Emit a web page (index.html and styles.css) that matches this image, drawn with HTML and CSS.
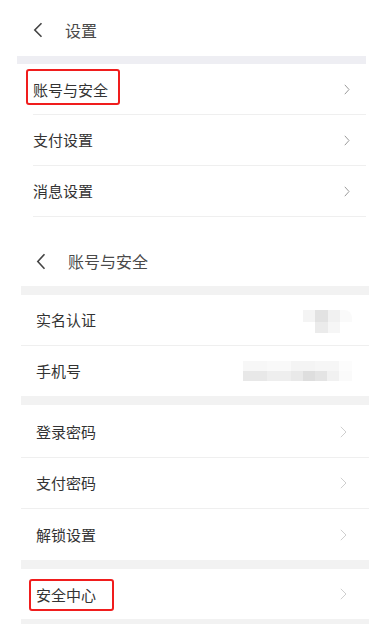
FILE: index.html
```html
<!DOCTYPE html>
<html lang="zh-CN">
<head>
<meta charset="utf-8">
<link rel="stylesheet" href="styles.css">
</head>
<body>
<section class="screen screen-a">
  <header class="nav">
    <svg class="back" width="10" height="16" viewBox="0 0 10 16"><path d="M8.5 1.2 L1.8 8 L8.5 14.8" fill="none" stroke="#444" stroke-width="1.6"/></svg>
    <span class="nav-title">设置</span>
  </header>
  <div class="band band-a"></div>
  <ul class="list list-a">
    <li class="row"><span class="label mark mark-a">账号与安全</span><svg class="chev" width="6" height="11" viewBox="0 0 6 11"><path d="M0.8 0.8 L5 5.5 L0.8 10.2" fill="none" stroke="#9a9a9a" stroke-width="1"/></svg></li>
    <li class="row"><span class="label">支付设置</span><svg class="chev" width="6" height="11" viewBox="0 0 6 11"><path d="M0.8 0.8 L5 5.5 L0.8 10.2" fill="none" stroke="#9a9a9a" stroke-width="1"/></svg></li>
    <li class="row"><span class="label">消息设置</span><svg class="chev" width="6" height="11" viewBox="0 0 6 11"><path d="M0.8 0.8 L5 5.5 L0.8 10.2" fill="none" stroke="#9a9a9a" stroke-width="1"/></svg></li>
  </ul>
</section>

<section class="screen screen-b">
  <header class="nav">
    <svg class="back" width="10" height="17" viewBox="0 0 10 17"><path d="M8.5 1.2 L1.8 8.5 L8.5 15.8" fill="none" stroke="#444" stroke-width="1.6"/></svg>
    <span class="nav-title">账号与安全</span>
  </header>
  <div class="band band-b"></div>
  <ul class="list list-b">
    <li class="row"><span class="label">实名认证</span><span class="blur blur-name"></span></li>
    <li class="row"><span class="label">手机号</span><span class="blur blur-phone"></span></li>
  </ul>
  <div class="band band-b"></div>
  <ul class="list list-b list-pw">
    <li class="row"><span class="label">登录密码</span><svg class="chev" width="7" height="12" viewBox="0 0 7 12"><path d="M0.8 0.8 L6 6 L0.8 11.2" fill="none" stroke="#cfcfcf" stroke-width="1"/></svg></li>
    <li class="row"><span class="label">支付密码</span><svg class="chev" width="7" height="12" viewBox="0 0 7 12"><path d="M0.8 0.8 L6 6 L0.8 11.2" fill="none" stroke="#cfcfcf" stroke-width="1"/></svg></li>
    <li class="row"><span class="label">解锁设置</span><svg class="chev" width="7" height="12" viewBox="0 0 7 12"><path d="M0.8 0.8 L6 6 L0.8 11.2" fill="none" stroke="#cfcfcf" stroke-width="1"/></svg></li>
  </ul>
  <div class="band band-b"></div>
  <ul class="list list-b">
    <li class="row row-last"><span class="label mark mark-b">安全中心</span><svg class="chev" width="7" height="12" viewBox="0 0 7 12"><path d="M0.8 0.8 L6 6 L0.8 11.2" fill="none" stroke="#cfcfcf" stroke-width="1"/></svg></li>
  </ul>
  <div class="band band-b band-end"></div>
</section>
</body>
</html>
```

FILE: styles.css
```css
* { box-sizing: border-box; }
html, body { margin: 0; padding: 0; background: #fff; }
body {
  width: 378px;
  height: 631px;
  overflow: hidden;
  font-family: "Noto Sans CJK SC", "Noto Sans", sans-serif;
  color: #333;
}
ul { list-style: none; margin: 0; padding: 0; }

.screen-a { margin: 0 12px 0 17px; }
.screen-b { margin: 19px 9px 0 21px; }

.nav {
  display: flex;
  align-items: center;
  gap: 22px;
}
.screen-a .nav { height: 56px; padding: 4px 0 0 16px; }
.screen-b .nav { height: 50px; padding: 0 0 0 15px; }
.back { flex: none; display: block; }
.nav-title { font-size: 16px; color: #4a4a4a; line-height: 20px; }

.band-a { height: 8px; background: #eeeef3; }
.band-b { height: 9px; background: #f2f2f2; }
.band-end { height: 5px; }

.row {
  display: flex;
  align-items: center;
  justify-content: space-between;
  border-bottom: 1px solid #efefef;
}
.label { font-size: 15px; line-height: 20px; color: #333; }
.chev { display: block; flex: none; }

.list-a .row { height: 51px; margin-left: 16px; padding-right: 16px; }
.list-b .row { height: 51px; padding: 0 22px 0 15px; }
.list-b .row:last-child { border-bottom: none; height: 50px; }
.list-pw .row:first-child { height: 53px; padding-top: 2px; }
.list-pw .row:last-child { height: 51px; }
.row-last { height: 50px; }

.mark {
  display: inline-block;
  border: 2px solid #f01d1d;
  border-radius: 3px;
}
.mark-a { height: 36px; padding: 6px 10px 0 5px; line-height: 26px; margin-left: -7px; margin-top: -4px; }
.mark-b { padding: 0 16px 0 5px; margin-left: -7px; height: 32px; line-height: 28px; margin-top: 2px; }

.blur { display: block; flex: none; }
.blur-name {
  width: 49px;
  height: 23px;
  margin-right: -5px;
  margin-top: 2px;
  border-radius: 0 8px 8px 0;
  background:
    linear-gradient(to right, #fff 0 12px, #ebebeb 12px 25px, #f6f6f6 25px 37px, #fff 37px) 0 12px / 100% 11px no-repeat,
    linear-gradient(to right, #f4f4f4 0 12px, #e2e2e2 12px 25px, #f1f1f1 25px 37px, #fafafa 37px) 0 0 / 100% 12px no-repeat;
}
.blur-phone {
  width: 109px;
  height: 20px;
  margin-right: -5px;
  background:
    linear-gradient(to right, #e8e8e8 0 24px, #eeeeee 24px 48px, #e9e9e9 48px 60px, #dedede 60px 72px, #e4e4e4 72px 84px, #f1f1f1 84px 96px, #fafafa 96px) 0 10px / 100% 10px no-repeat,
    linear-gradient(to right, #f7f7f7 0 24px, #f9f9f9 24px 48px, #f4f4f4 48px 72px, #f6f6f6 72px 96px, #fcfcfc 96px) 0 0 / 100% 10px no-repeat;
}
```
